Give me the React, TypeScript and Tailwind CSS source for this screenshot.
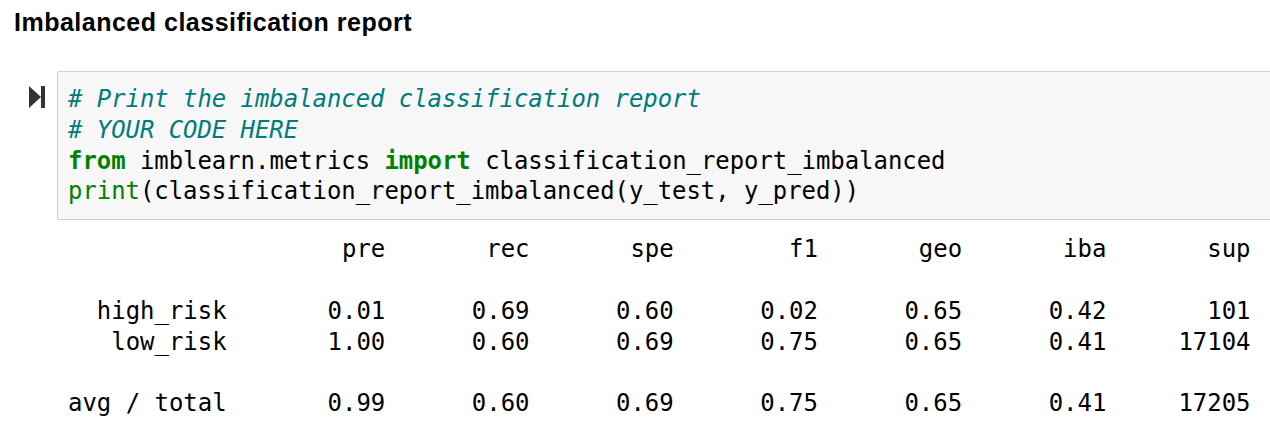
import React from "react";

const mono = { fontFamily: '"DejaVu Sans Mono", "Liberation Mono", monospace' };

function fmtRow(label: string, vals: string[]) {
  let s = label.padStart(11, " ") + "  ";
  s += vals.map((v) => v.padStart(9, " ")).join(" ");
  return s;
}

const outputLines = [
  fmtRow("", ["pre", "rec", "spe", "f1", "geo", "iba", "sup"]),
  "",
  fmtRow("high_risk", ["0.01", "0.69", "0.60", "0.02", "0.65", "0.42", "101"]),
  fmtRow("low_risk", ["1.00", "0.60", "0.69", "0.75", "0.65", "0.41", "17104"]),
  "",
  fmtRow("avg / total", ["0.99", "0.60", "0.69", "0.75", "0.65", "0.41", "17205"]),
];

export default function App() {
  return (
    <div className="w-[1270px] h-[433px] overflow-hidden bg-white text-black">
      <h1
        className="pl-[14px] pt-[8px] text-[25px] leading-[28px] font-bold tracking-[0.5px]"
        style={{ fontFamily: '"Liberation Sans", Arial, sans-serif' }}
      >
        Imbalanced classification report
      </h1>
      <div className="mt-[35px] flex">
        <div className="w-[57px] shrink-0 pl-[29px] pt-[15px]">
          <svg width="16" height="22" viewBox="0 0 16 22">
            <polygon points="0,0 12,11 0,22" fill="#333333" />
            <rect x="12" y="0" width="4" height="22" fill="#333333" />
          </svg>
        </div>
        <div className="w-[1240px] shrink-0">
          <div className="border border-[#cfcfcf] rounded-[2px] bg-[#f7f7f7] pl-[10px] py-[12px]">
            <pre className="text-[23.9px] leading-[30.8px] m-0" style={mono}>
              <span className="italic text-[#007b7b]"># Print the imbalanced classification report</span>
              {"\n"}
              <span className="italic text-[#007b7b]"># YOUR CODE HERE</span>
              {"\n"}
              <span className="font-bold text-[#008000]">from</span>
              {" imblearn.metrics "}
              <span className="font-bold text-[#008000]">import</span>
              {" classification_report_imbalanced\n"}
              <span className="text-[#008000]">print</span>
              {"(classification_report_imbalanced(y_test, y_pred))"}
            </pre>
          </div>
          <pre className="mt-[14px] pl-[11px] text-[23.96px] leading-[30.8px] m-0" style={mono}>
            {outputLines.join("\n")}
          </pre>
        </div>
      </div>
    </div>
  );
}
